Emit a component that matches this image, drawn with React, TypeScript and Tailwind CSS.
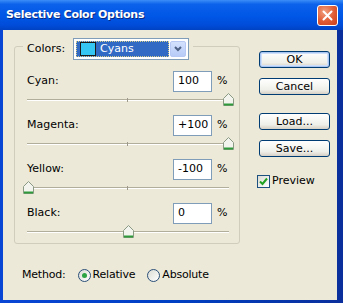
import React from "react";

type Row = { label: string; value: string; pos: number };

const rows: Row[] = [
    { label: "Cyan:", value: "100", pos: 100 },
    { label: "Magenta:", value: "+100", pos: 100 },
    { label: "Yellow:", value: "-100", pos: -100 },
    { label: "Black:", value: "0", pos: 0 },
];

const Thumb = () => (
    <svg width="11" height="13" viewBox="0 0 11 13">
        <path d="M0.5 5.5 L5.5 0.5 L10.5 5.5 V12.5 H0.5 Z" fill="#f4f4ee" stroke="#8b9a84" />
        <path d="M1 11.5 H10" stroke="#2f9a3a" strokeWidth="2" />
    </svg>
);

const Slider = ({ pos }: { pos: number }) => {
    const center = 1 + ((pos + 100) / 200) * 200;
    return (
        <div className="relative h-[12px] w-[204px]">
            <div className="absolute left-0 right-[2px] top-[5px] h-[2px] border-t border-[#b2ae9c] bg-white" />
            <div className="absolute left-[100px] top-[4px] h-[4px] w-px bg-[#9c998a]" />
            <div className="absolute -top-[1px]" style={{ left: center - 5.5 }}>
                <Thumb />
            </div>
        </div>
    );
};

const Button = ({ label, primary }: { label: string; primary?: boolean }) => (
    <div
        className={`flex h-[17px] w-[71px] items-center justify-center rounded-[3px] border border-[#003c74] bg-[linear-gradient(to_bottom,#ffffff,#f0f0ea_70%,#d6d0c5)] text-[11px] leading-none text-black ${
            primary ? "shadow-[inset_0_0_0_1px_#a9c6f2,inset_0_0_0_2px_#cfe0fa]" : ""
        }`}
    >
        {label}
    </div>
);

const Radio = ({ checked }: { checked?: boolean }) => (
    <div className="flex h-[13px] w-[13px] items-center justify-center rounded-full border border-[#2a4f78] bg-[linear-gradient(135deg,#dcdcd4,#ffffff)]">
        {checked && <div className="h-[5px] w-[5px] rounded-full bg-[#2ca443]" />}
    </div>
);

export default function App() {
    return (
        <div className="flex h-[303px] w-[343px] flex-col overflow-hidden bg-[linear-gradient(to_right,#0a46d4,#0040c4_50%,#0a2f9c)] font-['DejaVu_Sans',sans-serif] text-[11px] text-black">
            <div className="flex h-[30px] shrink-0 items-center justify-between bg-[linear-gradient(to_bottom,#3b8ef7_0%,#0c62ea_14%,#0056e6_55%,#004cd8_85%,#0042c2_100%)] pl-[6px] pr-[5px]">
                <span className="text-[11px] font-bold tracking-[-0.3px] text-white [text-shadow:1px_1px_0_#0a2a80]">
                    Selective Color Options
                </span>
                <div className="flex h-[21px] w-[21px] items-center justify-center rounded-[3px] border border-white bg-[radial-gradient(circle_at_35%_30%,#f0a080,#e05a32_55%,#c8401c)]">
                    <svg width="11" height="11" viewBox="0 0 11 11">
                        <path d="M1.5 1.5 L9.5 9.5 M9.5 1.5 L1.5 9.5" stroke="white" strokeWidth="2" strokeLinecap="round" />
                    </svg>
                </div>
            </div>

            <div className="mb-[3px] ml-[3px] mr-[6px] flex flex-1 bg-[#ece9d8]">
                <div className="flex flex-col pl-[11px] pt-[16px]">
                    <div className="relative h-[198px] w-[226px] rounded-[3px] border border-[#d0cdbd] px-[12px] pt-[24px]">
                        <div className="absolute -top-[9px] left-[8px] flex items-center bg-[#ece9d8] px-[4px]">
                            <span className="w-[46px]">Colors:</span>
                            <div className="flex h-[22px] w-[116px] items-stretch border border-[#7f9db9] bg-white p-[2px]">
                                <div className="flex flex-1 items-center border border-dotted border-[#d4cc8a] bg-[#316ac5] pl-[3px] text-white">
                                    <div className="h-[14px] w-[16px] border border-[#1a1a1a] bg-[#36c6f2]" />
                                    <span className="ml-[4px]">Cyans</span>
                                </div>
                                <div className="ml-px flex w-[16px] items-center justify-center rounded-[2px] border border-[#b6c8f3] bg-[linear-gradient(to_bottom,#d4e1fd,#b7cbf7)]">
                                    <svg width="8" height="6" viewBox="0 0 8 6">
                                        <path d="M1 1 L4 4 L7 1" fill="none" stroke="#4d6185" strokeWidth="2" />
                                    </svg>
                                </div>
                            </div>
                        </div>

                        <div className="flex flex-col gap-[9px]">
                            {rows.map((r) => (
                                <div key={r.label} className="flex flex-col">
                                    <div className="flex h-[21px] w-[204px] items-center">
                                        <span className="flex-1">{r.label}</span>
                                        <div className="flex h-[21px] w-[39px] items-center border border-[#7f9db9] bg-white pl-[4px]">
                                            {r.value}
                                        </div>
                                        <span className="ml-[5px] w-[14px]">%</span>
                                    </div>
                                    <div className="mt-[2px]">
                                        <Slider pos={r.pos} />
                                    </div>
                                </div>
                            ))}
                        </div>
                    </div>

                    <div className="mt-[23px] flex h-[16px] items-center pl-[8px] tracking-[-0.2px]">
                        <span>Method:</span>
                        <div className="ml-[12px]">
                            <Radio checked />
                        </div>
                        <span className="ml-[2px]">Relative</span>
                        <div className="ml-[12px]">
                            <Radio />
                        </div>
                        <span className="ml-[2px]">Absolute</span>
                    </div>
                </div>

                <div className="ml-[19px] flex flex-col pt-[21px]">
                    <Button label="OK" primary />
                    <div className="mt-[10px]">
                        <Button label="Cancel" />
                    </div>
                    <div className="mt-[18px]">
                        <Button label="Load..." />
                    </div>
                    <div className="mt-[10px]">
                        <Button label="Save..." />
                    </div>
                    <div className="-ml-[2px] mt-[16px] flex items-center">
                        <div className="flex h-[13px] w-[13px] items-center justify-center border border-[#1c5180] bg-[linear-gradient(135deg,#dcdcd4,#ffffff)]">
                            <svg width="9" height="9" viewBox="0 0 9 9">
                                <path d="M1 4.5 L3.5 7 L8 1.5" fill="none" stroke="#21a121" strokeWidth="2" />
                            </svg>
                        </div>
                        <span className="ml-[2px]">Preview</span>
                    </div>
                </div>
            </div>
        </div>
    );
}
